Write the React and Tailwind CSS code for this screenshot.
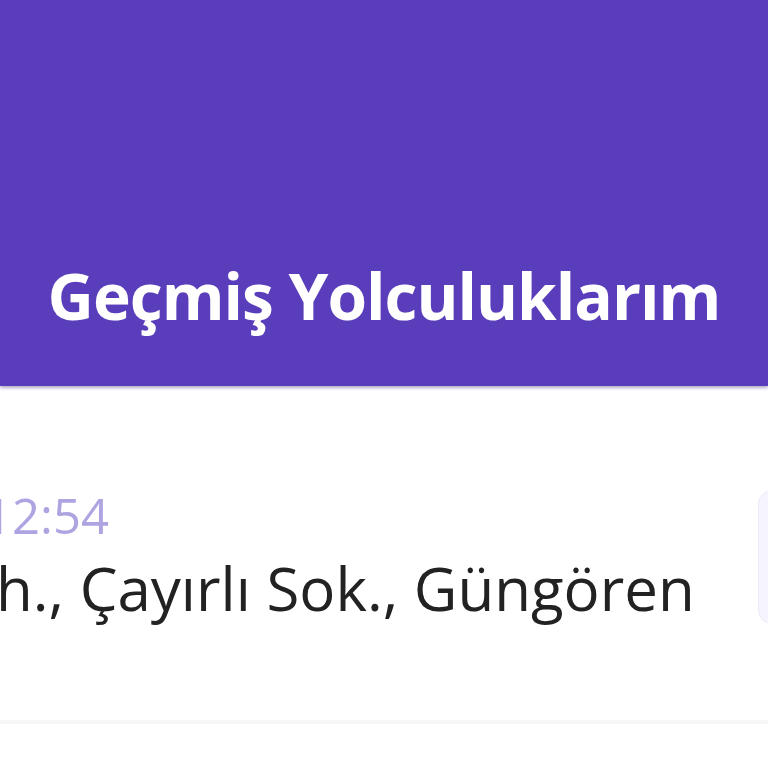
import React from 'react';

const font = { fontFamily: '"Open Sans", "Noto Sans", sans-serif' };

function Header() {
  return (
    <div className="h-[386px] bg-[#5a3dba] flex items-end justify-center pb-[58px] shadow-[0_2px_3px_rgba(40,20,100,0.35)] relative z-10">
      <h1 className="text-white font-bold text-[64px] leading-none tracking-[-1px]">
        Geçmiş Yolculuklarım
      </h1>
    </div>
  );
}

function TripRow() {
  return (
    <div className="relative h-[338px] border-b-[4px] border-[#f6f6f6] overflow-hidden">
      <div className="pt-[105px] flex flex-col whitespace-nowrap">
        <span className="text-[#aea4e2] text-[49px] leading-none ml-[-16px]">12:54</span>
        <span className="text-[#222222] text-[60px] leading-none mt-[18px] ml-[-4px]">
          h., Çayırlı Sok., Güngören
        </span>
      </div>
      {/* sağdaki kart */}
      <div className="absolute left-[758px] top-[104px] w-[120px] h-[134px] rounded-[14px] bg-[#f6f4fe] border border-[#ecebf7]" />
    </div>
  );
}

export default function App() {
  return (
    <div className="w-[768px] h-[768px] bg-white overflow-hidden" style={font}>
      <Header />
      <TripRow />
    </div>
  );
}
